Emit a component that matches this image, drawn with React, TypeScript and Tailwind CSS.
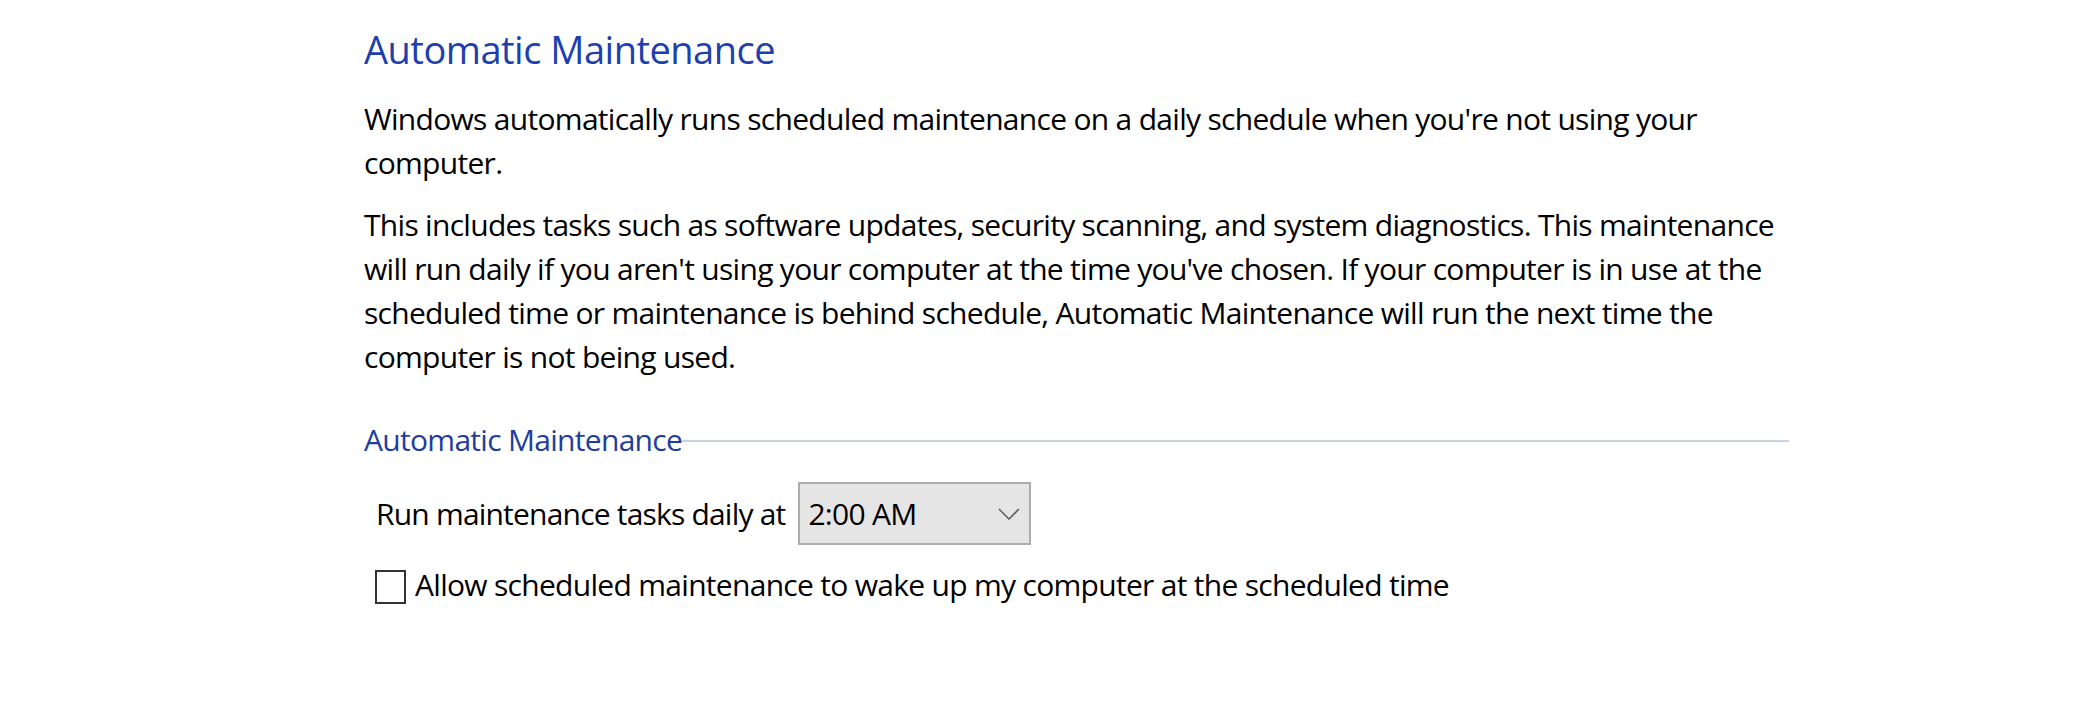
const body = "text-[30px] leading-[44px] tracking-[-0.7px]";

function Chevron() {
  return (
    <svg width="22" height="12" viewBox="0 0 22 12" fill="none">
      <polyline points="1,1 11,11 21,1" stroke="#5f5f5f" strokeWidth="1.6" />
    </svg>
  );
}

export default function App() {
  return (
    <div className="min-h-[721px] w-full bg-white font-['Open_Sans',sans-serif] text-black">
      <div className="ml-[364px] w-[1425px] pt-[23px]">
        <h1 className="text-[38px] leading-[52px] tracking-[-0.5px] text-[#1e3fae]">Automatic Maintenance</h1>

        <p className={`mt-[22px] ${body}`}>
          Windows automatically runs scheduled maintenance on a daily schedule when you're not using your
          <br />
          computer.
        </p>

        <p className={`mt-[18px] ${body}`}>
          This includes tasks such as software updates, security scanning, and system diagnostics. This maintenance
          <br />
          will run daily if you aren't using your computer at the time you've chosen. If your computer is in use at the
          <br />
          scheduled time or maintenance is behind schedule, Automatic Maintenance will run the next time the
          <br />
          computer is not being used.
        </p>

        <div className="mt-[39px] flex items-center">
          <span className={`${body} tracking-[-0.6px] text-[#1e3d9e]`}>Automatic Maintenance</span>
          <div className="mt-[1px] h-[2px] flex-1 bg-[#c6d4e6]" />
        </div>

        <div className="ml-[12px] mt-[20px] flex items-center">
          <span className={`${body} tracking-[-0.8px]`}>Run maintenance tasks daily at</span>
          <div className="ml-[13px] flex h-[63px] w-[233px] items-center justify-between border-2 border-[#adadad] bg-[#e5e5e5] pl-[8px] pr-[9px]">
            <span className={body}>2:00 AM</span>
            <Chevron />
          </div>
        </div>

        <label className="ml-[11px] mt-[15px] flex items-start">
          <span className="mt-[10px] h-[34px] w-[31px] border-2 border-[#333333] bg-white" />
          <span className={`ml-[9px] mt-[3px] ${body}`}>Allow scheduled maintenance to wake up my computer at the scheduled time</span>
        </label>
      </div>
    </div>
  );
}
